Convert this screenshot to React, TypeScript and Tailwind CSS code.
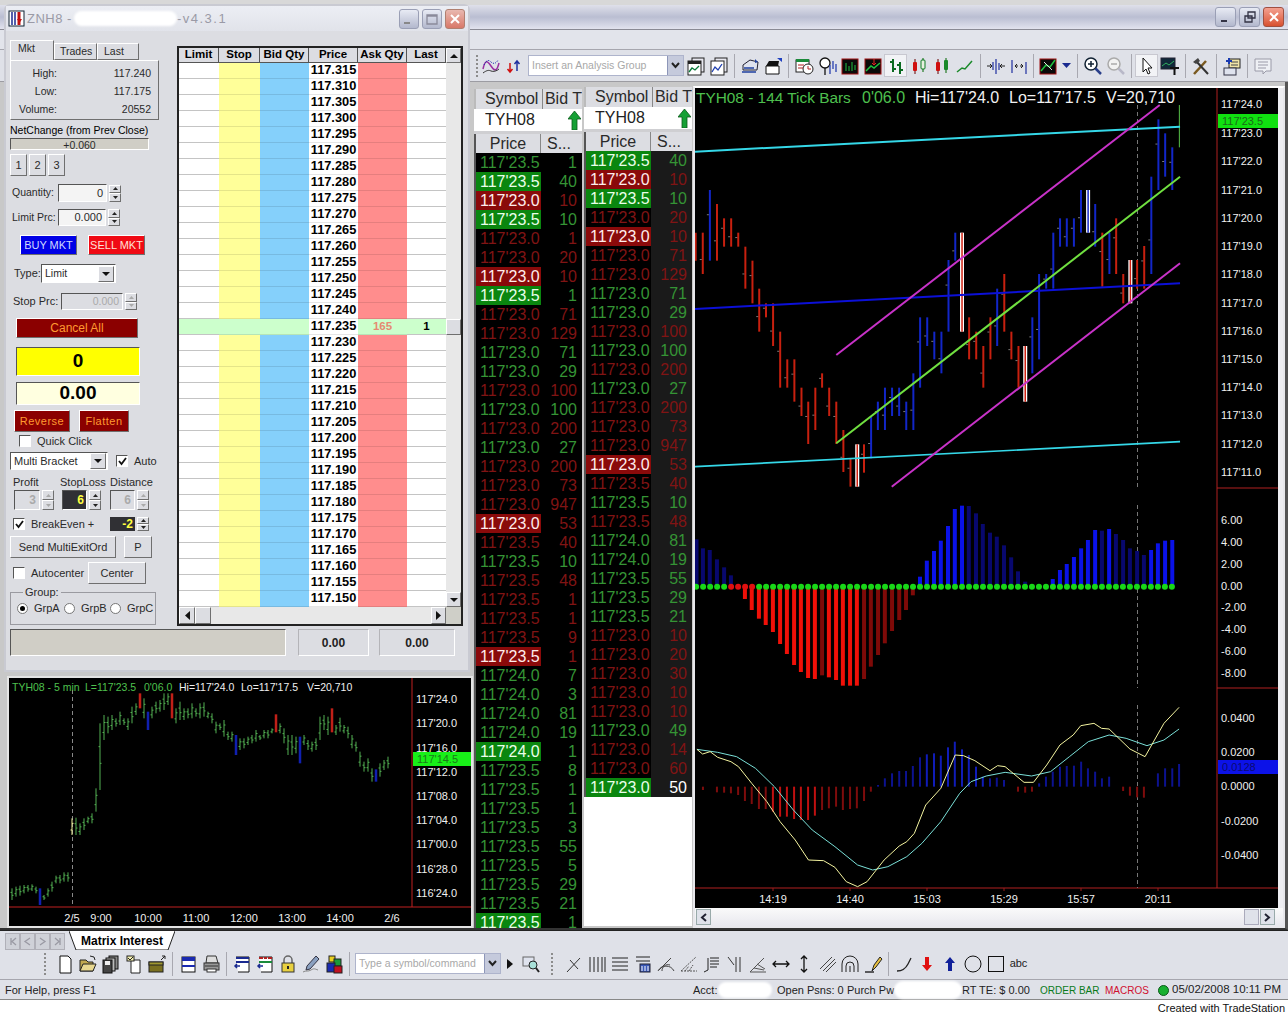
import React from 'react';

const raised = 'border border-t-white border-l-white border-r-[#6f6f6f] border-b-[#6f6f6f]';
const sunken = 'border border-t-[#555] border-l-[#555] border-r-white border-b-white';

// ---------- data ----------

const prices = [
  '117.315', '117.310', '117.305', '117.300', '117.295', '117.290', '117.285', '117.280', '117.275',
  '117.270', '117.265', '117.260', '117.255', '117.250', '117.245', '117.240', '117.235', '117.230',
  '117.225', '117.220', '117.215', '117.210', '117.205', '117.200', '117.195', '117.190', '117.185',
  '117.180', '117.175', '117.170', '117.165', '117.160', '117.155', '117.150',
];

type Tick = [string, string, 'g' | 'r', boolean?];

const ticksA: Tick[] = [
  ['23.5', '1', 'g'], ['23.5', '40', 'g', true], ['23.0', '10', 'r', true], ['23.5', '10', 'g', true],
  ['23.0', '1', 'r'], ['23.0', '20', 'r'], ['23.0', '10', 'r', true], ['23.5', '1', 'g', true],
  ['23.0', '71', 'r'], ['23.0', '129', 'r'], ['23.0', '71', 'g'], ['23.0', '29', 'g'],
  ['23.0', '100', 'r'], ['23.0', '100', 'g'], ['23.0', '200', 'r'], ['23.0', '27', 'g'],
  ['23.0', '200', 'r'], ['23.0', '73', 'r'], ['23.0', '947', 'r'], ['23.0', '53', 'r', true],
  ['23.5', '40', 'r'], ['23.5', '10', 'g'], ['23.5', '48', 'r'], ['23.5', '1', 'r'],
  ['23.5', '1', 'r'], ['23.5', '9', 'r'], ['23.5', '1', 'r', true], ['24.0', '7', 'g'],
  ['24.0', '3', 'g'], ['24.0', '81', 'g'], ['24.0', '19', 'g'], ['24.0', '1', 'g', true],
  ['23.5', '8', 'g'], ['23.5', '1', 'g'], ['23.5', '1', 'g'], ['23.5', '3', 'g'],
  ['23.5', '55', 'g'], ['23.5', '5', 'g'], ['23.5', '29', 'g'], ['23.5', '21', 'g'],
  ['23.5', '1', 'g', true],
];

const ticksB: Tick[] = [
  ['23.5', '40', 'g', true], ['23.0', '10', 'r', true], ['23.5', '10', 'g', true], ['23.0', '20', 'r'],
  ['23.0', '10', 'r', true], ['23.0', '71', 'r'], ['23.0', '129', 'r'], ['23.0', '71', 'g'],
  ['23.0', '29', 'g'], ['23.0', '100', 'r'], ['23.0', '100', 'g'], ['23.0', '200', 'r'],
  ['23.0', '27', 'g'], ['23.0', '200', 'r'], ['23.0', '73', 'r'], ['23.0', '947', 'r'],
  ['23.0', '53', 'r', true], ['23.5', '40', 'r'], ['23.5', '10', 'g'], ['23.5', '48', 'r'],
  ['24.0', '81', 'g'], ['24.0', '19', 'g'], ['23.5', '55', 'g'], ['23.5', '29', 'g'],
  ['23.5', '21', 'g'], ['23.0', '10', 'r'], ['23.0', '20', 'r'], ['23.0', '30', 'r'],
  ['23.0', '10', 'r'], ['23.0', '10', 'r'], ['23.0', '49', 'g'], ['23.0', '14', 'r'],
  ['23.0', '60', 'r'], ['23.0', '50', 'g', true],
];

// tick bars as read off the reference: x, top, bottom, colour (r, b, R = white outlined red, B = white outlined blue)
const tickBars: [number, number, number, string][] = [
  [2, 428, 512, 'r'], [23, 428, 552, 'r'], [44, 300, 512, 'b'], [65, 342, 512, 'r'], [86, 385, 470, 'r'],
  [107, 385, 470, 'r'], [128, 428, 470, 'r'], [149, 470, 596, 'r'], [170, 512, 640, 'r'], [190, 596, 725, 'r'],
  [210, 640, 682, 'r'], [231, 640, 768, 'r'], [252, 725, 893, 'r'], [273, 808, 893, 'r'], [294, 808, 935, 'r'],
  [315, 893, 978, 'r'], [335, 935, 1062, 'r'], [356, 893, 1020, 'r'], [376, 850, 893, 'r'], [397, 893, 978, 'r'],
  [418, 935, 1062, 'r'], [439, 1020, 1146, 'r'], [460, 1105, 1190, 'r'], [480, 1063, 1190, 'R'], [500, 1063, 1148, 'r'],
  [521, 978, 1105, 'b'], [541, 935, 1020, 'b'], [562, 893, 1020, 'b'], [583, 893, 978, 'b'], [604, 893, 978, 'b'],
  [625, 935, 1020, 'b'], [646, 850, 1020, 'b'], [666, 682, 893, 'b'], [687, 682, 768, 'b'], [708, 725, 808, 'b'],
  [729, 725, 850, 'b'], [750, 510, 725, 'b'], [770, 428, 512, 'b'], [790, 428, 725, 'R'], [811, 682, 808, 'r'],
  [832, 725, 808, 'r'], [853, 768, 893, 'r'], [874, 682, 808, 'r'], [894, 596, 768, 'b'], [915, 552, 725, 'r'],
  [936, 725, 808, 'r'], [957, 768, 893, 'r'], [977, 768, 935, 'R'], [998, 682, 850, 'b'], [1018, 552, 808, 'b'],
  [1039, 552, 596, 'b'], [1060, 428, 596, 'b'], [1080, 385, 470, 'b'], [1100, 385, 470, 'b'], [1121, 385, 470, 'b'],
  [1142, 300, 428, 'b'], [1163, 300, 428, 'B'], [1184, 342, 470, 'b'], [1205, 428, 590, 'r'], [1226, 428, 552, 'b'],
  [1246, 385, 552, 'r'], [1267, 552, 640, 'r'], [1288, 510, 640, 'R'], [1308, 510, 596, 'r'], [1329, 468, 596, 'r'],
  [1350, 260, 552, 'b'], [1371, 88, 300, 'b'], [1391, 130, 260, 'b'], [1412, 172, 300, 'b'],
];

const upper = (x: number) => 695 + (x * 530) / 1568;
const upperY = (y: number) => 90 + y / 3;
const lower = (x: number) => 695 + (x * 593) / 1568;
const lowerY = (y: number) => 490 + y / 3;

// histogram: x, end of bar. Above the zero line blue, below red. Last flag = bright
const hist: [number, number, boolean][] = [
  [4, 148, false], [21, 175, false], [39, 180, false], [58, 208, false], [77, 232, false], [95, 256, false],
  [132, 327, true], [150, 360, true], [169, 386, true], [187, 405, true], [206, 426, true], [225, 462, true],
  [243, 492, true], [262, 525, true], [280, 546, true], [299, 564, true], [317, 567, true], [336, 556, false],
  [354, 562, true], [373, 570, true], [391, 587, true], [410, 587, true], [428, 587, true], [447, 567, false],
  [465, 530, false], [484, 495, false], [502, 460, false], [521, 423, false], [540, 390, false], [558, 360, false],
  [576, 316, false], [595, 260, true], [613, 212, true], [632, 183, true], [650, 152, true], [669, 108, true],
  [687, 57, true], [706, 47, true], [724, 48, false], [743, 70, false], [761, 102, false], [780, 128, false],
  [798, 140, false], [817, 166, false], [836, 202, false], [854, 244, false], [873, 275, false], [946, 267, true],
  [965, 240, true], [983, 222, true], [1002, 201, true], [1021, 175, true], [1039, 150, true], [1058, 120, true],
  [1076, 122, false], [1095, 117, true], [1113, 132, false], [1132, 150, false], [1150, 175, false], [1169, 183, false],
  [1187, 195, false], [1206, 180, true], [1224, 160, true], [1243, 152, true], [1262, 150, true],
];

const dotX = Array.from({ length: 69 }, (_, i) => 3 + i * 18.5);
const redDots = new Set([5, 6, 7, 8]);

const osc: [number, number][] = [
  [21, 900], [58, 907], [77, 908], [95, 910], [114, 915], [132, 933], [150, 942], [169, 957], [187, 957], [206, 965],
  [225, 980], [243, 980], [262, 987], [280, 990], [299, 990], [317, 977], [336, 960], [354, 955], [373, 950], [391, 960],
  [410, 957], [428, 955], [447, 933], [465, 905], [484, 885], [502, 865], [521, 850], [540, 843], [558, 843], [576, 828],
  [595, 802], [613, 793], [632, 790], [650, 797], [669, 772], [687, 755], [706, 778], [724, 795], [743, 830], [761, 860],
  [780, 865], [798, 863], [817, 870], [854, 905], [873, 908], [891, 905], [910, 880], [928, 860], [946, 845], [965, 830],
  [983, 828], [1002, 827], [1021, 815], [1039, 835], [1058, 845], [1076, 865], [1095, 860], [1113, 890], [1132, 903],
  [1150, 917], [1169, 922], [1187, 923], [1224, 850], [1243, 835], [1262, 835], [1280, 822],
];

const macdLine: [number, number][] = [
  [5, 778], [20, 792], [40, 785], [60, 802], [95, 815], [115, 830], [150, 880], [190, 935], [225, 995], [265, 1050],
  [300, 1110], [340, 1112], [370, 1132], [400, 1175], [430, 1190], [455, 1175], [500, 1110], [540, 1068], [560, 1055],
  [580, 1030], [610, 945], [650, 895], [688, 795], [710, 797], [740, 812], [780, 842], [800, 827], [820, 830], [870, 877],
  [895, 877], [930, 825], [965, 765], [1000, 735], [1020, 707], [1055, 700], [1075, 715], [1095, 717], [1150, 777],
  [1190, 800], [1215, 750], [1240, 700], [1280, 652],
];

const signalLine: [number, number][] = [
  [5, 778], [60, 787], [110, 800], [160, 835], [210, 890], [260, 960], [310, 1020], [370, 1070], [430, 1125], [470, 1140],
  [510, 1130], [560, 1100], [600, 1060], [650, 995], [700, 910], [730, 875], [770, 858], [820, 847], [890, 858], [940, 845],
  [990, 800], [1040, 755], [1095, 735], [1140, 745], [1195, 767], [1240, 750], [1280, 717],
];

// 5 min bars, one every 12 units from x = 36
const minBars: [number, number, string?][] = [
  [640, 675], [635, 665], [632, 662], [630, 655], [630, 650], [628, 648], [635, 655], [640, 690, 'b'], [660, 675], [640, 665],
  [620, 650], [602, 625], [600, 625], [592, 620], [592, 620], [430, 480, 'y'], [428, 480], [445, 480], [430, 465], [425, 445],
  [415, 445], [340, 410], [145, 345], [120, 195], [125, 175], [120, 165], [130, 155], [110, 150], [130, 150], [130, 165],
  [95, 145], [85, 120], [55, 100, 'r'], [70, 130], [110, 165, 'b'], [95, 130], [80, 115], [75, 110], [55, 105], [55, 90],
  [55, 130, 'r'], [100, 145], [80, 135], [100, 135], [100, 130], [85, 130], [100, 125], [85, 130], [82, 125], [110, 130],
  [115, 145], [140, 175], [145, 165], [135, 185], [170, 195], [170, 200], [180, 240, 'b'], [190, 225], [190, 220], [185, 210],
  [180, 205], [165, 200], [180, 195], [165, 190], [165, 190], [160, 175], [118, 172, 'r'], [145, 175], [160, 205], [180, 240],
  [180, 240], [185, 235], [185, 265, 'b'], [180, 210], [195, 225], [200, 230], [190, 225], [125, 195], [120, 165], [125, 180],
  [100, 172, 'r'], [150, 180], [128, 170], [150, 175], [155, 190], [180, 220], [200, 230], [230, 275], [260, 290], [250, 290],
  [280, 320], [283, 320, 'b'], [265, 305], [255, 285], [245, 280],
];

// ---------- toolbar icons ----------

const icons: Record<string, React.ReactNode> = {
  wave: (
    <>
      <path d="M2 13c2-9 4-9 8-3s6 5 8-3" fill="none" stroke="#9a2fa0" strokeWidth="1.5" />
      <path d="M3 9c3-6 5-5 7-3s5 2 7-2" fill="none" stroke="#2030b0" strokeDasharray="1 1" />
      <path d="M2 17c4-3 6-3 8-2s6 0 8-2" fill="none" stroke="#333" />
    </>
  ),
  updown: (
    <>
      <path d="M6 7v9M3.5 13l2.5 3 2.500-3" fill="none" stroke="#d01010" strokeWidth="1.500" />
      <path d="M13 15V5M10.500 8L13 5l2.500 3" fill="none" stroke="#2030a0" strokeWidth="1.500" />
    </>
  ),
  docA: (
    <>
      <rect x="6" y="2" width="12" height="14" fill="#e8e8f0" stroke="#222" />
      <rect x="2" y="5" width="13" height="14" fill="#fff" stroke="#222" />
      <rect x="2" y="5" width="13" height="3" fill="#222" />
      <path d="M3 16l3-4 3 2 4-4" fill="none" stroke="#0a7a3a" strokeWidth="1.300" />
    </>
  ),
  docB: (
    <>
      <rect x="6" y="2" width="12" height="14" fill="#e8e8f0" stroke="#222" />
      <rect x="2" y="5" width="13" height="14" fill="#fff" stroke="#222" />
      <path d="M3 16l3-5 3 3 4-6" fill="none" stroke="#2040b0" strokeWidth="1.300" />
    </>
  ),
  open: (
    <>
      <path d="M3 9l7-5 8 2-1 8H3z" fill="#dfe3ee" stroke="#223" />
      <path d="M2 16h14M4 12h10" stroke="#2040a0" strokeWidth="1.300" />
      <path d="M15 3l3 3-3 1z" fill="#2040a0" />
    </>
  ),
  openB: (
    <>
      <path d="M3 10h13v8H3z" fill="#fff" stroke="#111" />
      <path d="M3 10l3-5h10l-1 5" fill="#111" />
      <path d="M14 2h5v4z" fill="#2040c0" />
    </>
  ),
  calClock: (
    <>
      <rect x="2" y="4" width="13" height="12" fill="#fff" stroke="#222" />
      <rect x="2" y="3" width="13" height="3" fill="#1b8a3a" />
      <circle cx="14" cy="13" r="5" fill="#fff" stroke="#222" />
      <path d="M14 10v3h3" stroke="#b02020" fill="none" />
      <path d="M4 9h6M4 12h5" stroke="#b02020" />
    </>
  ),
  magBars: (
    <>
      <circle cx="8" cy="7" r="5" fill="#fff" stroke="#111" strokeWidth="1.300" />
      <path d="M8 12v7" stroke="#111" strokeWidth="1.300" />
      <path d="M13 9v9M16 5v8M19 8v8" stroke="#2a40b0" strokeWidth="1.300" />
    </>
  ),
  blackBars: (
    <>
      <rect x="2" y="3" width="16" height="15" fill="#0a0a0a" stroke="#a01010" />
      <path d="M6 7v8M9 10v5M12 6v9M15 9v5" stroke="#20c040" />
    </>
  ),
  blackLine: (
    <>
      <rect x="2" y="3" width="16" height="15" fill="#0a0a0a" stroke="#a01010" />
      <path d="M3 15l5-5 3 2 6-5" fill="none" stroke="#20c040" strokeWidth="1.500" />
      <path d="M11 3v6M9 7l2 2 2-2" fill="none" stroke="#e02020" />
    </>
  ),
  ohlc: (
    <>
      <path d="M7 3v13M4 6h3M7 13h3M14 6v12M11 9h3M14 14h3" fill="none" stroke="#0a6a20" strokeWidth="2" />
    </>
  ),
  candleA: (
    <>
      <path d="M6 3v15" stroke="#600" />
      <rect x="4" y="6" width="4" height="9" rx="1" fill="#d01010" />
      <path d="M14 2v14" stroke="#060" />
      <rect x="12" y="4" width="4" height="9" rx="1" fill="#e8f0e0" stroke="#0a7a20" />
    </>
  ),
  candleB: (
    <>
      <path d="M6 3v15" stroke="#600" />
      <rect x="4" y="6" width="4" height="9" rx="1" fill="#d01010" />
      <path d="M14 2v15" stroke="#060" />
      <rect x="12" y="4" width="4" height="10" rx="1" fill="#1a8a2a" />
    </>
  ),
  line: <path d="M2 16l5-4 3 1 7-8" fill="none" stroke="#1a8a2a" strokeWidth="1.500" />,
  expand: (
    <>
      <path d="M10 3v15M7 6v8M13 7v7" stroke="#2030a0" strokeWidth="1.200" />
      <path d="M1 10h5M19 10h-5M4 8l2 2-2 2M16 8l-2 2 2 2" fill="none" stroke="#222" />
    </>
  ),
  contract: (
    <>
      <path d="M3 4v13M17 6v12" stroke="#2030a0" strokeWidth="1.200" />
      <path d="M6 10h3M11 10h3M8 8l-2 2 2 2M12 8l2 2-2 2" fill="none" stroke="#222" />
    </>
  ),
  blackArrows: (
    <>
      <rect x="2" y="3" width="16" height="15" fill="#0a0a0a" stroke="#a01010" />
      <path d="M3 15l5-6 4 2 5-7" fill="none" stroke="#20c040" strokeWidth="1.500" />
      <path d="M6 6l8 8" stroke="#ddd" />
    </>
  ),
  zoomIn: (
    <>
      <circle cx="8" cy="8" r="6" fill="#fff" stroke="#123" strokeWidth="1.500" />
      <path d="M5 8h6M8 5v6" stroke="#123" strokeWidth="1.500" />
      <path d="M12.500 12.500L18 18" stroke="#2a3f8a" strokeWidth="2.500" />
    </>
  ),
  zoomOut: (
    <>
      <circle cx="8" cy="8" r="6" fill="#f2f2f2" stroke="#aaa" strokeWidth="1.500" />
      <path d="M5 8h6" stroke="#aaa" strokeWidth="1.500" />
      <path d="M12.500 12.500L18 18" stroke="#b8b8c8" strokeWidth="2.500" />
    </>
  ),
  pointer: <path d="M6 2v14l3-3 2 5 2-1-2-5h4z" fill="#fff" stroke="#111" />,
  chartT: (
    <>
      <rect x="1" y="2" width="14" height="11" fill="#10283a" stroke="#223" />
      <path d="M2 10l4-3 3 2 5-4" fill="none" stroke="#30b060" />
      <path d="M10 12h9M14.500 12v7" stroke="#111" strokeWidth="2" />
    </>
  ),
  hammer: (
    <>
      <path d="M3 18L15 5" stroke="#7a5a20" strokeWidth="2.500" />
      <path d="M17 18L5 5" stroke="#333" strokeWidth="2" />
      <path d="M2 6l5-4 2 3-4 3z" fill="#444" />
    </>
  ),
  addDoc: (
    <>
      <rect x="7" y="3" width="11" height="9" fill="#f0e4a8" stroke="#222" />
      <path d="M9 6h7M9 9h7" stroke="#444" />
      <rect x="2" y="12" width="12" height="7" fill="#dfe3ee" stroke="#334" />
      <path d="M4 5h6M7 2v6" stroke="#1a3ab0" strokeWidth="2" />
    </>
  ),
  comment: (
    <>
      <path d="M2 3h16v12h-5l-3 3v-3H2z" fill="#eef0f4" stroke="#9a9aa8" />
      <path d="M5 6h10M5 9h10M5 12h8" stroke="#9a9aa8" />
    </>
  ),
  page: <path d="M5 2h8l3 3v14H5z" fill="#fff" stroke="#111" />,
  folder: (
    <>
      <path d="M2 6h6l2 2h5v9H2z" fill="#c0a850" stroke="#222" />
      <path d="M2 17l3-7h13l-3 7z" fill="#e8d890" stroke="#222" />
      <path d="M12 2l4 1 1 3" fill="none" stroke="#222" />
    </>
  ),
  docs: (
    <>
      <rect x="8" y="2" width="9" height="13" fill="#888" stroke="#111" />
      <rect x="5" y="4" width="9" height="13" fill="#bbb" stroke="#111" />
      <rect x="2" y="6" width="9" height="13" fill="#444" stroke="#111" />
      <rect x="4" y="7" width="5" height="4" fill="#eee" />
    </>
  ),
  pageCheck: (
    <>
      <path d="M7 6h9v13H7z" fill="#fff" stroke="#222" />
      <rect x="3" y="2" width="7" height="5" fill="#f4f0b0" stroke="#222" />
      <path d="M4 4l2 2 3-3" fill="none" stroke="#222" />
    </>
  ),
  oliveBox: (
    <>
      <rect x="2" y="8" width="14" height="10" fill="#7a7020" stroke="#222" />
      <rect x="2" y="8" width="14" height="3" fill="#a09830" stroke="#222" />
      <path d="M14 6l4-4M15 2h3v3" fill="none" stroke="#222" />
    </>
  ),
  winBlue: (
    <>
      <rect x="4" y="3" width="13" height="15" fill="#fff" stroke="#111" />
      <rect x="4" y="3" width="13" height="4" fill="#1a2ab0" />
      <rect x="4" y="11" width="13" height="2" fill="#1a2ab0" />
    </>
  ),
  printer: (
    <>
      <path d="M6 2h9l2 7H5z" fill="#ddd" stroke="#333" />
      <rect x="3" y="9" width="15" height="7" fill="#999" stroke="#333" />
      <path d="M4 12h13" stroke="#333" />
      <rect x="6" y="15" width="9" height="3" fill="#fff" stroke="#333" />
    </>
  ),
  listA: (
    <>
      <path d="M4 3h13v15H6" fill="#fff" stroke="#111" />
      <path d="M4 4h13M4 8h13" stroke="#1a2a90" strokeWidth="2" />
      <path d="M8 12H3M5 10l-2 2 2 2" fill="none" stroke="#1a2a90" strokeWidth="1.500" />
    </>
  ),
  listB: (
    <>
      <path d="M4 3h13v15H6" fill="#fff" stroke="#111" />
      <path d="M4 4h4M9 4h3M13 4h4" stroke="#b02020" strokeWidth="2" />
      <path d="M4 8h13" stroke="#1a8a3a" strokeWidth="2" />
      <path d="M8 12H3M5 10l-2 2 2 2" fill="none" stroke="#1a2a90" strokeWidth="1.500" />
    </>
  ),
  lock: (
    <>
      <path d="M6 9V6a4 4 0 018 0v3" fill="none" stroke="#666" strokeWidth="1.500" />
      <rect x="4" y="9" width="12" height="9" fill="#e8d040" stroke="#333" />
      <rect x="9" y="12" width="2" height="3" fill="#222" />
    </>
  ),
  pen: (
    <>
      <path d="M15 2l3 3-9 10-4 1 1-4z" fill="#8aa0c0" stroke="#334" />
      <path d="M2 18c3-2 5 0 8-2s4-1 7 0" fill="none" stroke="#888" />
    </>
  ),
  cubes: (
    <>
      <rect x="5" y="2" width="6" height="6" fill="#e8d020" stroke="#222" />
      <rect x="10" y="5" width="7" height="7" fill="#1a9a3a" stroke="#222" />
      <rect x="3" y="9" width="8" height="9" fill="#1a2ab0" stroke="#222" />
      <rect x="10" y="12" width="8" height="7" fill="#c01020" stroke="#222" />
    </>
  ),
  mag: (
    <>
      <rect x="2" y="3" width="11" height="9" fill="#dfe3ee" stroke="#666" />
      <circle cx="12" cy="11" r="4" fill="#a8e0d8" stroke="#222" />
      <path d="M15 14l3 4" stroke="#222" strokeWidth="2" />
    </>
  ),
  t1: <path d="M3 18L16 4M6 6l8 9M3 18h0" fill="none" stroke="#333" />,
  t2: <path d="M3 3v15M7 3v15M11 3v15M15 3v15M18 3v15" stroke="#222" />,
  t3: <path d="M2 4h16M2 8h16M2 12h16M2 16h16" stroke="#222" />,
  t4: (
    <>
      <path d="M3 3h14M3 7h14" stroke="#222" />
      <rect x="7" y="10" width="10" height="8" fill="#3a58b8" stroke="#223" />
      <path d="M9 12v5M12 12v5M15 12v5" stroke="#fff" />
    </>
  ),
  t5: <path d="M2 17a9 9 0 0116 0M6 17a6 6 0 018-6M3 16l12-12" fill="none" stroke="#444" />,
  t6: <path d="M2 17L17 3M2 17h16M6 17l4-5M10 17l4-6" fill="none" stroke="#555" strokeDasharray="2 1" />,
  t7: <path d="M2 18l4-2V4M8 4h9M8 7h9M8 10h9M8 13h7" fill="none" stroke="#222" />,
  t8: <path d="M3 3l6 8M11 3v15M15 3v15" fill="none" stroke="#333" />,
  t9: <path d="M2 18L16 4M2 18h16M6 14l10 2M9 10l8 5" fill="none" stroke="#555" />,
  t10: <path d="M2 10h16M5 7l-3 3 3 3M15 7l3 3-3 3" fill="none" stroke="#111" strokeWidth="1.300" />,
  t11: <path d="M10 2v16M7 5l3-3 3 3M7 15l3 3 3-3" fill="none" stroke="#111" strokeWidth="1.300" />,
  t12: <path d="M3 15L15 3M6 17L18 5M9 18L19 8" fill="none" stroke="#444" />,
  t13: <path d="M2 18V10a8 8 0 0116 0v8M6 18v-6a4 4 0 018 0v6M10 18v-6" fill="none" stroke="#222" />,
  t14: (
    <>
      <path d="M2 18h9" stroke="#111" strokeWidth="1.300" />
      <path d="M9 17l2-6 6-8 2 2-6 8z" fill="#e8c040" stroke="#222" />
    </>
  ),
  t15: <path d="M3 17c5 0 9-3 11-7 1-2 2-4 3-6" fill="none" stroke="#222" strokeWidth="1.300" />,
  downRed: <path d="M8 3h4v8h3l-5 6-5-6h3z" fill="#e01010" />,
  upBlue: <path d="M8 17h4V9h3l-5-6-5 6h3z" fill="#10209a" />,
  circle: <circle cx="10" cy="10" r="8" fill="none" stroke="#111" />,
  square: <rect x="2.500" y="2.500" width="15" height="15" fill="none" stroke="#111" />,
};

// ---------- small pieces ----------

function Tool({ name, active }: { name: string; active?: boolean }) {
  return (
    <span
      className={`w-[23px] h-[23px] shrink-0 flex items-center justify-center ${
        active ? 'border border-[#c8c8d0] bg-[#f2f3f6]' : ''
      }`}
    >
      <svg width="20" height="20" viewBox="0 0 20 20">
        {icons[name]}
      </svg>
    </span>
  );
}

const Sep = () => (
  <span className="w-[8px] h-[24px] shrink-0 flex justify-center">
    <span className="w-px h-full bg-[#a8a8b0]" />
  </span>
);

const Grip = ({ className }: { className?: string }) => (
  <span className={`shrink-0 h-[22px] border-l-2 border-dotted border-[#8c8c8c] ${className ?? ''}`} />
);

function Combo({ text, width }: { text: string; width: string }) {
  return (
    <span className={`${width} h-[21px] shrink-0 flex items-center bg-white border border-[#aeb4cc] text-[#a8a8a8] text-[10.500px] pl-[3px]`}>
      <span className="flex-1 whitespace-nowrap">{text}</span>
      <span className="w-[16px] h-full bg-[#c5cadc] border-l border-[#8d96b8] flex items-center justify-center">
        <svg width="9" height="7" viewBox="0 0 9 7">
          <path d="M1 1l3.500 4L8 1" fill="none" stroke="#222" strokeWidth="2" />
        </svg>
      </span>
    </span>
  );
}

function WinButton({ kind, main }: { kind: 'min' | 'max' | 'rest' | 'close'; main?: boolean }) {
  const bg =
    kind === 'close'
      ? main
        ? 'bg-gradient-to-b from-[#f3a090] to-[#d8502f] border-[#a05040]'
        : 'bg-gradient-to-b from-[#e8b8b0] to-[#d87868] border-[#b08070]'
      : 'bg-gradient-to-b from-[#e8ebf4] to-[#b3b8cd] border-[#9a9fb5]';
  return (
    <span className={`${main ? 'w-[21px]' : 'w-[20px]'} h-[20px] rounded-[3px] border flex items-center justify-center ${bg}`}>
      <svg width="14" height="14" viewBox="0 0 14 14">
        {kind === 'min' && <rect x="2" y="10" width="6" height="2" fill={main ? '#334' : '#888'} />}
        {kind === 'max' && <path d="M2 3h10v9H2zM2 4h10" fill="none" stroke="#8a8a9a" strokeWidth="1.300" />}
        {kind === 'rest' && <path d="M5 2h7v6H5zM2 6h7v6H2z" fill="none" stroke="#334" strokeWidth="1.300" />}
        {kind === 'close' && <path d="M3 3l8 8M11 3l-8 8" stroke="#fff" strokeWidth="2" />}
      </svg>
    </span>
  );
}

function Spin({ muted, h = 'h-[17px]' }: { muted?: boolean; h?: string }) {
  const fill = muted ? '#aaa' : '#222';
  return (
    <span className={`w-[12px] ${h} shrink-0 flex flex-col ml-[2px]`}>
      {[0, 1].map((i) => (
        <span key={i} className={`flex-1 bg-[#dcdde2] flex items-center justify-center ${raised}`}>
          <svg width="5" height="3" viewBox="0 0 5 3">
            <path d={i === 0 ? 'M2.500 0L5 3H0z' : 'M0 0h5L2.500 3z'} fill={fill} />
          </svg>
        </span>
      ))}
    </span>
  );
}

function Check({ on, className }: { on?: boolean; className?: string }) {
  return (
    <span className={`w-[12px] h-[12px] shrink-0 bg-white flex items-center justify-center ${sunken} ${className ?? ''}`}>
      {on && (
        <svg width="9" height="9" viewBox="0 0 9 9">
          <path d="M1 4l2.500 3L8 1" fill="none" stroke="#111" strokeWidth="1.800" />
        </svg>
      )}
    </span>
  );
}

function Radio({ on }: { on?: boolean }) {
  return (
    <span className="w-[11px] h-[11px] shrink-0 rounded-full bg-white border border-[#777] flex items-center justify-center">
      {on && <span className="w-[5px] h-[5px] rounded-full bg-black" />}
    </span>
  );
}

function Drop({ text, width }: { text: string; width: string }) {
  return (
    <span className={`${width} shrink-0 h-full bg-white flex items-center pl-[3px] ${sunken}`}>
      <span className="flex-1">{text}</span>
      <span className={`w-[16px] h-[16px] mr-px bg-[#dcdde2] flex items-center justify-center ${raised}`}>
        <svg width="8" height="4" viewBox="0 0 8 4">
          <path d="M0 0h8L4 4z" fill="#111" />
        </svg>
      </span>
    </span>
  );
}

const Arrow = ({ d }: { d: string }) => (
  <svg width="7" height="9" viewBox="0 0 7 9">
    <path d={d} fill="#111" />
  </svg>
);

// ---------- order window ----------

function LeftControls() {
  return (
    <div className="w-[171px] shrink-0 pl-[4px] flex flex-col text-[10.500px] text-[#2a2a2a]">
      <div className="h-[20px] flex items-end">
        <span className={`w-[44px] h-[20px] pl-[7px] leading-[15px] bg-[#dcdde2] border-b-0 ${raised}`}>Mkt</span>
        <span className={`w-[43px] h-[17px] pl-[5px] leading-[15px] ${raised}`}>Trades</span>
        <span className={`w-[42px] h-[17px] pl-[6px] leading-[15px] ${raised}`}>Last</span>
      </div>
      <div className={`w-[149px] h-[60px] pt-[4px] pr-[7px] ${raised}`}>
        {[
          ['High:', '117.240'],
          ['Low:', '117.175'],
          ['Volume:', '20552'],
        ].map(([k, v]) => (
          <div key={k} className="h-[18px] flex justify-between items-center">
            <span className="w-[46px] text-right">{k}</span>
            <span>{v}</span>
          </div>
        ))}
      </div>
      <div className="h-[15px] mt-[2px] leading-[16px] whitespace-nowrap text-black">NetChange (from Prev Close)</div>
      <div className={`w-[139px] h-[12px] mt-[1px] bg-[#d0cec6] text-center leading-[12px] ${sunken}`}>+0.060</div>
      <div className="h-[22px] mt-[4px] flex gap-[2px]">
        {['1', '2', '3'].map((n) => (
          <span key={n} className={`w-[17px] flex items-center justify-center text-[11px] ${raised}`}>
            {n}
          </span>
        ))}
      </div>
      <div className="h-[18px] mt-[8px] flex items-center">
        <span className="w-[48px] pl-[2px]">Quantity:</span>
        <span className={`w-[49px] h-full bg-[#f4f4f4] text-right pr-[3px] text-[11px] leading-[16px] ${sunken}`}>0</span>
        <Spin />
      </div>
      <div className="h-[17px] mt-[7px] flex items-center">
        <span className="w-[48px] pl-[2px]">Limit Prc:</span>
        <span className={`w-[48px] h-full bg-[#f4f4f4] text-right pr-[3px] text-[11px] leading-[15px] ${sunken}`}>0.000</span>
        <Spin />
      </div>
      <div className="h-[20px] mt-[9px] flex pl-[10px] gap-[11px] text-[11px]">
        <span className={`w-[57px] flex items-center justify-center bg-[#0000e6] text-[#cfd8ff] ${raised}`}>BUY MKT</span>
        <span className={`w-[57px] flex items-center justify-center bg-[#f00a14] text-[#ffe0d8] ${raised}`}>SELL MKT</span>
      </div>
      <div className="h-[19px] mt-[9px] flex items-center pl-[4px]">
        <span className="w-[27px] text-[11px]">Type:</span>
        <Drop text="Limit" width="w-[75px]" />
      </div>
      <div className="h-[17px] mt-[10px] flex items-center pl-[3px]">
        <span className="w-[48px] text-[11px] whitespace-nowrap">Stop Prc:</span>
        <span className={`w-[62px] h-full text-right pr-[3px] text-[#aaa] leading-[15px] ${sunken}`}>0.000</span>
        <Spin muted />
      </div>
      <div className={`w-[122px] h-[20px] mt-[8px] ml-[6px] bg-[#8b0000] text-[#ff9a30] text-[12px] flex items-center justify-center ${raised}`}>
        Cancel All
      </div>
      <div className={`w-[124px] h-[29px] mt-[9px] ml-[6px] bg-[#ffff00] text-black font-bold text-[19px] flex items-center justify-center ${sunken}`}>
        0
      </div>
      <div className={`w-[124px] h-[23px] mt-[6px] ml-[6px] bg-[#ffffe0] text-black font-bold text-[19px] flex items-center justify-center ${sunken}`}>
        0.00
      </div>
      <div className="h-[22px] mt-[5px] ml-[4px] flex gap-[9px] text-[11px] text-[#ff9a30] tracking-[0.5px]">
        <span className={`w-[56px] bg-[#8b0000] flex items-center justify-center ${raised}`}>Reverse</span>
        <span className={`w-[50px] bg-[#8b0000] flex items-center justify-center ${raised}`}>Flatten</span>
      </div>
      <div className="h-[12px] mt-[3px] ml-[9px] flex items-center gap-[6px] text-[11px]">
        <Check />
        <span>Quick Click</span>
      </div>
      <div className="h-[18px] mt-[5px] flex items-center text-[11px]">
        <Drop text="Multi Bracket" width="w-[98px]" />
        <Check on className="ml-[8px]" />
        <span className="ml-[6px]">Auto</span>
      </div>
      <div className="h-[12px] mt-[6px] flex items-center leading-none text-[11px]">
        <span className="w-[50px] pl-[3px]">Profit</span>
        <span className="w-[50px]">StopLoss</span>
        <span>Distance</span>
      </div>
      <div className="h-[20px] mt-[2px] ml-[4px] flex items-center font-bold text-[12px]">
        <span className={`w-[26px] h-full text-right pr-[3px] text-[#aaa] leading-[18px] ${sunken}`}>3</span>
        <Spin muted h="h-full" />
        <span className={`w-[25px] h-full ml-[8px] bg-[#303034] text-[#ffff40] text-right pr-[2px] leading-[18px] ${sunken}`}>6</span>
        <Spin h="h-full" />
        <span className={`w-[25px] h-full ml-[9px] text-right pr-[3px] text-[#aaa] leading-[18px] ${sunken}`}>6</span>
        <Spin muted h="h-full" />
      </div>
      <div className="h-[14px] mt-[7px] ml-[3px] flex items-center text-[11px]">
        <Check on />
        <span className="w-[85px] pl-[6px]">BreakEven +</span>
        <span className="w-[25px] h-full bg-[#303034] text-[#ffff40] font-bold text-right pr-[2px] text-[12px] leading-[14px]">-2</span>
        <Spin h="h-full" />
      </div>
      <div className="h-[22px] mt-[5px] flex gap-[8px] text-[11px]">
        <span className={`w-[106px] flex items-center justify-center ${raised}`}>Send MultiExitOrd</span>
        <span className={`w-[28px] flex items-center justify-center ${raised}`}>P</span>
      </div>
      <div className="h-[22px] mt-[4px] ml-[3px] flex items-center text-[11px]">
        <Check />
        <span className="w-[63px] pl-[6px]">Autocenter</span>
        <span className={`w-[58px] h-full flex items-center justify-center ${raised}`}>Center</span>
      </div>
      <fieldset className="w-[146px] h-[39px] mt-[2px] border border-[#9a9aa0] text-[11px] flex items-center pl-[6px]">
        <legend className="ml-[6px] px-[2px] leading-[12px]">Group:</legend>
        <div className="flex items-center mt-[2px]">
          <Radio on />
          <span className="w-[36px] pl-[6px]">GrpA</span>
          <Radio />
          <span className="w-[35px] pl-[6px]">GrpB</span>
          <Radio />
          <span className="pl-[6px]">GrpC</span>
        </div>
      </fieldset>
    </div>
  );
}

function PriceLadder() {
  const cols = ['Limit', 'Stop', 'Bid Qty', 'Price', 'Ask Qty', 'Last'];
  const widths = ['w-[40px]', 'w-[41px]', 'w-[49px]', 'w-[49px]', 'w-[49px]', 'w-[39px]'];
  const rowBg = ['bg-white', 'bg-[#ffff99]', 'bg-[#85d0fb]', 'bg-white', 'bg-[#ff8d8d]', 'bg-white'];
  return (
    <div className="w-[286px] h-[580px] border-2 border-[#222] bg-white flex flex-col text-black">
      <div className="flex h-[15px] shrink-0 font-bold text-[11.500px]">
        {cols.map((c, i) => (
          <span key={c} className={`${widths[i]} bg-[#dcdde2] flex items-center justify-center whitespace-nowrap border-r border-b border-[#555]`}>
            {c}
          </span>
        ))}
        <span className={`w-[15px] bg-[#dcdde2] flex items-center justify-center ${raised}`}>
          <svg width="8" height="4" viewBox="0 0 8 4">
            <path d="M4 0l4 4H0z" fill="#111" />
          </svg>
        </span>
      </div>
      <div className="flex flex-1 min-h-0">
        <div className="flex-1 flex flex-col">
          {prices.map((p) => {
            const current = p === '117.235';
            return (
              <div key={p} className="flex h-[16px] shrink-0">
                {cols.map((c, i) => (
                  <span
                    key={c}
                    className={`${widths[i]} flex items-center justify-center leading-none border-b ${
                      i === 0 || i === 5 ? 'border-[#c4c4c4]' : 'border-black/10'
                    } ${current ? 'bg-[#ccffcc]' : rowBg[i]} ${c === 'Price' ? 'bg-white font-bold text-[12.800px]' : 'font-bold text-[11.500px]'} ${
                      c === 'Ask Qty' ? 'text-[#e58a72]' : ''
                    }`}
                  >
                    {c === 'Price' ? p : current && c === 'Ask Qty' ? '165' : current && c === 'Last' ? '1' : ''}
                  </span>
                ))}
              </div>
            );
          })}
        </div>
        <div className="w-[15px] bg-[#e8e8e8] flex flex-col">
          <span className="h-[256px] shrink-0" />
          <span className={`h-[16px] shrink-0 bg-[#dcdde2] ${raised}`} />
          <span className="flex-1" />
          <span className={`h-[15px] bg-[#dcdde2] flex items-center justify-center ${raised}`}>
            <svg width="8" height="4" viewBox="0 0 8 4">
              <path d="M0 0h8L4 4z" fill="#111" />
            </svg>
          </span>
        </div>
      </div>
      <div className="h-[17px] shrink-0 flex">
        <span className={`w-[16px] bg-[#dcdde2] flex items-center justify-center ${raised}`}>
          <Arrow d="M6 0v9L1 4.500z" />
        </span>
        <span className={`w-[16px] bg-[#dcdde2] ${raised}`} />
        <span className="flex-1 bg-[#e8e8e8]" />
        <span className={`w-[15px] bg-[#dcdde2] flex items-center justify-center ${raised}`}>
          <Arrow d="M1 0v9l5-4.500z" />
        </span>
        <span className="w-[15px] bg-[#cfcfc8]" />
      </div>
    </div>
  );
}

function OrderWindow() {
  return (
    <div className="absolute left-[4px] top-[4px] w-[466px] h-[668px] bg-[#dcdde2] border-2 border-[#c9cad2] rounded-t-[6px] flex flex-col">
      <div className="h-[25px] shrink-0 flex items-center bg-gradient-to-b from-[#eceef4] to-[#e1e3ea] pl-[2px] pr-[3px]">
        <svg width="17" height="17" viewBox="0 0 17 17">
          <rect x="1" y="1" width="15" height="15" fill="#fff" stroke="#123" />
          <path d="M4 2v13M7 2v13" stroke="#1a2a90" strokeWidth="1.500" />
          <path d="M11 2v13" stroke="#c01010" strokeWidth="3" />
          <path d="M9 9l2.500 4L14 9z" fill="#c01010" />
        </svg>
        <span className="ml-[2px] text-[13px] text-[#9a9aa6] tracking-[0.5px]">ZNH8 -</span>
        <span className="w-[103px] h-[15px] ml-[2px] bg-white rounded-full blur-[1px]" />
        <span className="text-[13px] text-[#9a9aa6] tracking-[1.500px]">-v4.3.1</span>
        <span className="ml-auto flex gap-[3px]">
          <WinButton kind="min" />
          <WinButton kind="max" />
          <WinButton kind="close" />
        </span>
      </div>
      <div className="flex pt-[9px]">
        <LeftControls />
        <div className="mt-[6px]">
          <PriceLadder />
        </div>
      </div>
      <div className="flex mt-[3px] ml-[4px] h-[27px] font-bold text-[12px] text-[#222]">
        <span className={`w-[276px] bg-[#d0cec6] ${sunken}`} />
        <span className="w-[71px] ml-[12px] flex items-center justify-center border border-[#b4b4b8] border-r-white border-b-white">0.00</span>
        <span className="w-[76px] ml-[10px] flex items-center justify-center border border-[#b4b4b8] border-r-white border-b-white">0.00</span>
      </div>
    </div>
  );
}

// ---------- matrix windows ----------

function TickRow({ t, stripe }: { t: Tick; stripe?: boolean }) {
  const green = t[2] === 'g';
  const lit = t[3];
  const label = `117'${t[0]}`;
  return (
    <div className="h-[19px] shrink-0 flex text-[16px] leading-[19px] font-light">
      <span
        className={`w-[65px] pl-[4px] overflow-hidden whitespace-nowrap ${
          lit ? (green ? 'bg-[#0a860f] text-[#eaffea]' : 'bg-[#8a0a0a] text-[#ffecec]') : green ? 'text-[#359435]' : 'text-[#801414]'
        }`}
      >
        {label}
      </span>
      <span
        className={`flex-1 text-right pr-[5px] ${stripe ? 'bg-[#1a1a1a]' : ''} ${
          t[1] === '50' ? 'text-white' : green ? 'text-[#359435]' : 'text-[#801414]'
        }`}
      >
        {t[1]}
      </span>
    </div>
  );
}

function MatrixWindow({ rows, className, stripe }: { rows: Tick[]; className: string; stripe?: boolean }) {
  return (
    <div className={`absolute w-[108px] bg-white flex flex-col overflow-hidden ${className}`}>
      <div className="h-[20px] shrink-0 flex bg-[#dcdde2] text-[#2a2a2a] text-[16px] leading-[20px] border-l-2 border-[#bbb] whitespace-nowrap">
        <span className="w-[71px] pl-[9px] border-r border-[#888]">Symbol</span>
        <span className="pl-[2px]">Bid T</span>
      </div>
      <div className="h-[22px] shrink-0 flex items-center justify-between pl-[11px] pr-[1px] text-[16px] text-[#222]">
        TYH08
        <svg width="13" height="19" viewBox="0 0 13 19">
          <path d="M6.500 0L13 8H9v11H4V8H0z" fill="#16a035" stroke="#0a5a1a" strokeWidth="0.800" />
        </svg>
      </div>
      <div className="h-[3px] shrink-0 bg-[#cfcfd2]" />
      <div className="h-[19px] shrink-0 flex bg-[#dcdde2] text-[#2a2a2a] text-[16px] leading-[19px] border-l-2 border-[#555]">
        <span className="w-[65px] text-center border-r border-[#888]">Price</span>
        <span className="flex-1 pl-[6px]">S...</span>
      </div>
      <div className="flex flex-col bg-black border-l-2 border-[#555]">
        {rows.map((t, i) => (
          <TickRow key={i} t={t} stripe={stripe} />
        ))}
      </div>
    </div>
  );
}

// ---------- charts ----------

function BigChart() {
  const priceLabels: [string, number][] = [
    ["117'24.0", 108], ["117'23.0", 137], ["117'22.0", 165], ["117'21.0", 194], ["117'20.0", 222], ["117'19.0", 250],
    ["117'18.0", 278], ["117'17.0", 307], ["117'16.0", 335], ["117'15.0", 363], ["117'14.0", 391], ["117'13.0", 419],
    ["117'12.0", 448], ["117'11.0", 476],
  ];
  const lowerLabels: [string, number][] = [
    ['6.00', 524], ['4.00', 546], ['2.00', 568], ['0.00', 590], ['-2.00', 611], ['-4.00', 633], ['-6.00', 655], ['-8.00', 677],
    ['0.0400', 722], ['0.0200', 756], ['0.0000', 790], ['-0.0200', 825], ['-0.0400', 859],
  ];
  const times: [string, number][] = [['14:19', 773], ['14:40', 850], ['15:03', 927], ['15:29', 1004], ['15:57', 1081], ['20:11', 1158]];
  const lines: [number, number, number, number, string, number][] = [
    [0, 185, 1435, 110, '#35d8e8', 2],
    [0, 1130, 1435, 1055, '#35d8e8', 1.700],
    [0, 657, 1435, 580, '#0c10d8', 2],
    [418, 1060, 1435, 260, '#70e040', 2],
    [418, 795, 1375, 45, '#c832c8', 2],
    [582, 1190, 1435, 520, '#c832c8', 2],
  ];
  const path = (pts: [number, number][]) => pts.map(([x, y]) => `${lower(x)},${lowerY(y)}`).join(' ');
  return (
    <svg width="583" height="820" viewBox="695 88 583 820" className="block bg-black">
      <g stroke="#9a1a1a">
        <path d="M1217 88V888M695 888H1278M1217 488H1278M1217 688H1278" fill="none" stroke="#b02020" />
        {times.map(([, x]) => (
          <path key={x} d={`M${x} 888v3`} />
        ))}
      </g>
      <path d="M1137.500 105V488M1137.500 505V688M1137.500 705V888" stroke="#777" strokeDasharray="4 3" />

      {tickBars.map(([x, a, b, c], i) => {
        const X = upper(x);
        const light = c === 'R' || c === 'B';
        const mid = upperY(a + (b - a) * (i % 2 ? 0.65 : 0.35));
        return (
          <g key={i}>
            {light && <line x1={X} x2={X} y1={upperY(a)} y2={upperY(b)} stroke="#fff" strokeWidth="4" />}
            <line
              x1={X}
              x2={X}
              y1={upperY(a)}
              y2={upperY(b)}
              stroke={c === 'r' ? '#c8200f' : c === 'b' ? '#1226c8' : c === 'R' ? '#d02010' : '#1226c8'}
              strokeWidth={light ? 1.500 : 2}
            />
            {!light && <path d={`M${X - 3} ${mid}H${X - 1}`} stroke="#999" strokeWidth="0.800" />}
          </g>
        );
      })}
      <path d={`M${upper(1433)} ${upperY(45)}V${upperY(172)}`} stroke="#58c048" />
      {lines.map(([x1, y1, x2, y2, c, w], i) => (
        <line key={i} x1={upper(x1)} y1={upperY(y1)} x2={upper(x2)} y2={upperY(y2)} stroke={c} strokeWidth={w} />
      ))}

      {hist.map(([x, y, bright], i) => (
        <line
          key={i}
          x1={lower(x)}
          x2={lower(x)}
          y1={lowerY(288)}
          y2={lowerY(y)}
          strokeWidth="4"
          stroke={y < 290 ? (bright ? '#0a12e8' : '#08086e') : bright ? '#f01008' : '#7e0a08'}
        />
      ))}
      {dotX.map((x, i) => (
        <circle key={i} cx={lower(x)} cy={lowerY(290)} r="3" fill={redDots.has(i) ? '#e01010' : '#18d818'} />
      ))}

      {osc.map(([x, y], i) => (
        <line
          key={i}
          x1={lower(x)}
          x2={lower(x)}
          y1={lowerY(890)}
          y2={lowerY(y)}
          strokeWidth="2"
          stroke={y < 890 ? (i > 30 && i < 40 ? '#101cb8' : '#0c1290') : y > 960 ? '#c01010' : '#7e0c0c'}
        />
      ))}
      <polyline points={path(signalLine)} fill="none" stroke="#7ae0d8" />
      <polyline points={path(macdLine)} fill="none" stroke="#f4f4a0" />

      <g fontSize="11" fill="#f0f0f0">
        {priceLabels.map(([t, y]) => (
          <text key={t} x="1221" y={y}>
            {t}
          </text>
        ))}
        {lowerLabels.map(([t, y]) => (
          <text key={t} x="1221" y={y}>
            {t}
          </text>
        ))}
        {times.map(([t, x]) => (
          <text key={t} x={x} y="903" textAnchor="middle">
            {t}
          </text>
        ))}
      </g>
      <rect x="1218" y="114" width="60" height="14" fill="#10e010" />
      <text x="1222" y="125" fontSize="11" fill="#1a6a1a">
        117'23.5
      </text>
      <rect x="1218" y="760" width="60" height="14" fill="#0c12e8" />
      <text x="1222" y="771" fontSize="11" fill="#0a0a70">
        0.0128
      </text>
      <g fontSize="16">
        <text x="696" y="103" fill="#4ec04e" fontSize="15.400">TYH08 - 144 Tick Bars</text>
        <text x="862" y="103" fill="#4ec04e">0'06.0</text>
        <text x="915" y="103" fill="#f0f0f0">Hi=117'24.0</text>
        <text x="1009" y="103" fill="#f0f0f0">Lo=117'17.5</text>
        <text x="1106" y="103" fill="#f0f0f0">V=20,710</text>
      </g>
    </svg>
  );
}

function SmallChart() {
  const labels: [string, number][] = [
    ["117'24.0", 703], ["117'20.0", 727], ["117'16.0", 752], ["117'12.0", 776], ["117'08.0", 800], ["117'04.0", 824],
    ["117'00.0", 848], ["116'28.0", 873], ["116'24.0", 897],
  ];
  const times: [string, number][] = [['2/5', 72], ['9:00', 101], ['10:00', 148], ['11:00', 196], ['12:00', 244], ['13:00', 292], ['14:00', 340], ['2/6', 392]];
  return (
    <svg width="462" height="248" viewBox="9 678 462 248" className="block bg-black">
      <path d="M412 678V907M9 907H471" fill="none" stroke="#c02020" />
      <path d="M72.500 690V907" stroke="#888" strokeDasharray="4 3" />
      <g fill="none">
        {minBars.map(([a, b, c], i) => {
          const x = (36 + i * 12) / 3;
          const y1 = 675 + a / 3;
          const y2 = 675 + b / 3;
          if (c === 'r' || c === 'b') {
            return <line key={i} x1={x} x2={x} y1={y1} y2={y2} stroke={c === 'r' ? '#c02018' : '#1020b0'} strokeWidth="2.500" />;
          }
          const o = y1 + (y2 - y1) * (i % 2 ? 0.7 : 0.35);
          const e = y1 + (y2 - y1) * (i % 2 ? 0.3 : 0.6);
          return (
            <path
              key={i}
              d={`M${x} ${y1}V${y2}M${x - 1.500} ${o}H${x}M${x} ${e}H${x + 1.500}`}
              stroke={c === 'y' ? '#f4f4a0' : '#52b052'}
            />
          );
        })}
      </g>
      <g fontSize="11" fill="#f0f0f0">
        {labels.map(([t, y]) => (
          <text key={t} x="416" y={y}>
            {t}
          </text>
        ))}
        {times.map(([t, x]) => (
          <text key={t} x={x} y="922" textAnchor="middle">
            {t}
          </text>
        ))}
      </g>
      <rect x="413" y="752" width="58" height="14" fill="#18f018" />
      <text x="417" y="763" fontSize="11" fill="#1a7a1a">
        117'14.5
      </text>
      <g fontSize="10.500">
        <text x="12" y="691" fill="#4ec04e">TYH08 - 5 min</text>
        <text x="85" y="691" fill="#4ec04e">L=117'23.5</text>
        <text x="144" y="691" fill="#4ec04e">0'06.0</text>
        <text x="179" y="691" fill="#f0f0f0">Hi=117'24.0</text>
        <text x="241" y="691" fill="#f0f0f0">Lo=117'17.5</text>
        <text x="307" y="691" fill="#f0f0f0">V=20,710</text>
      </g>
    </svg>
  );
}

// ---------- app ----------

export default function App() {
  const topLeft = ['wave', 'updown'];
  const bottomDraw = ['t1', 't2', 't3', 't4', 't5', 't6', 't7', 't8', 't9', 't10', 't11', 't12', 't13', 't14'];
  return (
    <div className="relative w-[1288px] h-[1015px] overflow-hidden bg-white font-['Liberation_Sans',Arial,sans-serif]">
      <div className="flex flex-col h-full">
        <div className="h-[5px] shrink-0 bg-[#d8d8d8]" />
        <div className="h-[25px] shrink-0 flex items-center justify-end gap-[3px] pr-[4px] bg-gradient-to-b from-[#dfe0ea] via-[#babed2] to-[#e2e3ee] border-b border-[#8a8a94]">
          <WinButton kind="min" main />
          <WinButton kind="rest" main />
          <WinButton kind="close" main />
        </div>
        <div className="h-[20px] shrink-0 bg-[#e2e4eb] border-b border-[#a6a6ae]" />
        <div className="h-[32px] shrink-0 flex items-center bg-[#dfe1e8] pl-[476px] border-b border-[#9c9ca2]">
          <Grip />
          {topLeft.map((n, i) => (
            <span key={n} className={i === 0 ? 'ml-[1px]' : ''}>
              <Tool name={n} />
            </span>
          ))}
          <span className="ml-[3px]">
            <Combo text="Insert an Analysis Group" width="w-[156px]" />
          </span>
          <Tool name="docA" />
          <Tool name="docB" />
          <Sep />
          <Tool name="open" />
          <Tool name="openB" />
          <Sep />
          <Tool name="calClock" />
          <Tool name="magBars" />
          <Tool name="blackBars" />
          <Tool name="blackLine" />
          <Tool name="ohlc" active />
          <Tool name="candleA" />
          <Tool name="candleB" />
          <Tool name="line" />
          <Sep />
          <Tool name="expand" />
          <Tool name="contract" />
          <span className="w-[6px] h-[24px] shrink-0 flex justify-center">
            <span className="w-px h-full bg-[#a8a8b0]" />
          </span>
          <Tool name="blackArrows" />
          <span className="w-[14px] shrink-0 flex justify-center">
            <svg width="9" height="5" viewBox="0 0 9 5">
              <path d="M0 0h9L4.500 5z" fill="#1a2a90" />
            </svg>
          </span>
          <Sep />
          <Tool name="zoomIn" />
          <Tool name="zoomOut" />
          <Sep />
          <Tool name="pointer" active />
          <Tool name="chartT" />
          <Sep />
          <Tool name="hammer" />
          <Sep />
          <Tool name="addDoc" />
          <Sep />
          <Tool name="comment" />
        </div>
        <div className="flex-1 min-h-0 bg-[#c8c8c8] border-b-2 border-[#333] border-r-[3px] border-r-[#555]" />
        <div className="h-[20px] shrink-0 flex items-end bg-[#dfe1e8] pl-[5px] border-t border-[#222]">
          {['M4 1v7M9 1L5 4.500 9 8', 'M8 1L3 4.500 8 8', 'M3 1l5 3.500L3 8', 'M8 1v7M3 1l4 3.500L3 8'].map((d) => (
            <span key={d} className="w-[15px] h-[17px] bg-[#cfd1d8] border border-[#b0b0b8] flex items-center justify-center">
              <svg width="11" height="9" viewBox="0 0 11 9">
                <path d={d} fill="none" stroke="#9a9aa4" strokeWidth="1.300" />
              </svg>
            </span>
          ))}
          <span className="relative ml-[4px] w-[106px] h-[19px] text-[12px] font-bold text-black flex items-center justify-center">
            <svg width="106" height="19" viewBox="0 0 106 19" className="absolute inset-0">
              <path d="M0 0L7 19H99L106 0" fill="#fff" stroke="#222" />
            </svg>
            <span className="relative">Matrix Interest</span>
          </span>
        </div>
        <div className="h-[30px] shrink-0 flex items-center bg-[#dfe1e8] pl-[44px] pb-[2px] border-b border-[#a6a6ae]">
          <Grip className="mr-[7px]" />
          {['page', 'folder', 'docs', 'pageCheck', 'oliveBox'].map((n) => (
            <Tool key={n} name={n} />
          ))}
          <Sep />
          <Tool name="winBlue" />
          <Tool name="printer" />
          <Sep />
          {['listA', 'listB', 'lock', 'pen', 'cubes'].map((n) => (
            <Tool key={n} name={n} />
          ))}
          <Sep />
          <span className="ml-[2px]">
            <Combo text="Type a symbol/command" width="w-[146px]" />
          </span>
          <span className="w-[18px] shrink-0 flex justify-center">
            <svg width="6" height="10" viewBox="0 0 6 10">
              <path d="M0 0l6 5-6 5z" fill="#111" />
            </svg>
          </span>
          <Tool name="mag" />
          <Grip className="mx-[9px]" />
          {bottomDraw.map((n) => (
            <Tool key={n} name={n} />
          ))}
          <Sep />
          {['t15', 'downRed', 'upBlue', 'circle', 'square'].map((n) => (
            <Tool key={n} name={n} />
          ))}
          <span className="w-[23px] shrink-0 text-center text-[11px] text-[#222]">abc</span>
        </div>
        <div className="h-[20px] shrink-0 flex items-center pt-[1px] bg-[#dfe1e8] text-[11px] text-[#222] whitespace-nowrap border-b border-[#888]">
          <span className="w-[693px] shrink-0 pl-[5px]">For Help, press F1</span>
          <span className="w-[25px] shrink-0">Acct:</span>
          <span className="w-[54px] h-[16px] shrink-0 bg-white rounded-full blur-[1px]" />
          <span className="w-[75px] shrink-0 pl-[5px]">Open Psns: 0</span>
          <span className="w-[47px] shrink-0">Purch Pw</span>
          <span className="w-[68px] h-[18px] shrink-0 bg-white rounded-full blur-[1px]" />
          <span className="w-[78px] shrink-0">RT TE: $ 0.00</span>
          <span className="w-[65px] shrink-0 text-[10px] text-[#0a7a1a]">ORDER BAR</span>
          <span className="w-[50px] shrink-0 text-[10px] text-[#d01030]">MACROS</span>
          <span className="w-[17px] shrink-0 flex justify-center">
            <span className="w-[11px] h-[11px] rounded-full bg-[#18b030] border border-[#0a5a18]" />
          </span>
          <span className="text-[11.500px]">05/02/2008 10:11 PM</span>
        </div>
        <div className="h-[15px] shrink-0 text-right pr-[3px] text-[11px] leading-[16px] text-[#111]">Created with TradeStation</div>
      </div>

      <div className="absolute left-[7px] top-[676px] w-[466px] h-[252px] border-2 border-[#e4e4e4]">
        <SmallChart />
      </div>
      <MatrixWindow rows={ticksA} className="left-[474px] top-[89px] h-[839px]" />
      <MatrixWindow rows={ticksB} className="left-[584px] top-[87px] h-[839px]" stripe />
      <div className="absolute left-[693px] top-[86px] w-[592px] h-[842px] bg-[#eeeef2] border-2 border-[#e8e8ec] border-t-white flex flex-col">
        <BigChart />
        <div className="flex-1 flex items-center px-[1px] bg-gradient-to-b from-[#fafafa] to-[#e8e8ee]">
          <span className="w-[15px] h-[16px] bg-[#dfe2ea] border border-[#9aa] flex items-center justify-center">
            <svg width="7" height="9" viewBox="0 0 7 9">
              <path d="M6 1L2 4.500 6 8" fill="none" stroke="#223" strokeWidth="2" />
            </svg>
          </span>
          <span className="ml-[533px] w-[15px] h-[16px] bg-[#dfe2ea] border border-[#aab]" />
          <span className="ml-[1px] w-[15px] h-[16px] bg-[#dfe2ea] border border-[#9aa] flex items-center justify-center">
            <svg width="7" height="9" viewBox="0 0 7 9">
              <path d="M1 1l4 3.500L1 8" fill="none" stroke="#223" strokeWidth="2" />
            </svg>
          </span>
        </div>
      </div>
      <OrderWindow />
    </div>
  );
}
